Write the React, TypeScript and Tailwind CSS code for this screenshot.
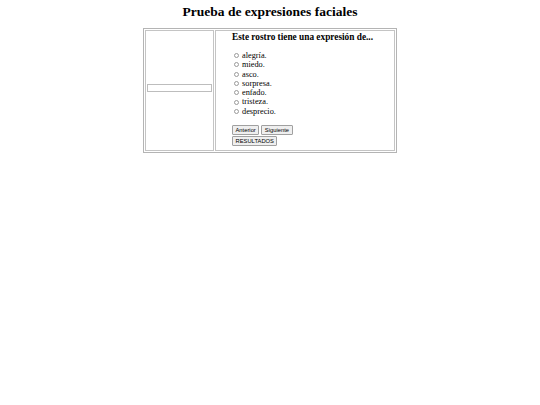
export default function App() {
  const options = [
    "alegría.",
    "miedo.",
    "asco.",
    "sorpresa.",
    "enfado.",
    "tristeza.",
    "desprecio.",
  ];

  return (
    <div className="min-h-[405px] w-full bg-white text-black font-['Liberation_Serif',serif]">
      <h1 className="pt-[4px] text-center text-[13.5px] font-bold leading-[16px]">
        Prueba de expresiones faciales
      </h1>

      <div className="mx-auto mt-[8px] flex w-[254px] gap-[1px] border border-[#b4b4b4] p-[1px]">
        {/* left cell: image placeholder */}
        <div className="flex w-[69px] shrink-0 items-center border border-[#c4c4c4] px-[1px] pb-[6px]">
          <div className="h-[8px] w-full border border-[#bdbdbd] bg-white" />
        </div>

        {/* right cell: question */}
        <div className="flex-1 border border-[#c4c4c4] pb-[4px] pl-[16px] pt-[1px]">
          <h2 className="whitespace-nowrap text-[9.3px] font-bold leading-[11px]">
            Este rostro tiene una expresión de...
          </h2>
          <ul className="mt-[8px] text-[8.3px] leading-[9.3px] text-black">
            {options.map((o) => (
              <li key={o} className="flex items-center gap-[3px] pl-[2px]">
                <span className="inline-block h-[5px] w-[5px] rounded-full border border-[#9a9a9a]" />
                {o}
              </li>
            ))}
          </ul>
          <div className="mt-[9px] flex flex-col items-start gap-[1px] font-['Liberation_Sans',sans-serif] text-[5.8px] leading-[6px]">
            <div className="flex gap-[2px]">
              <button className="rounded-[1px] border border-[#a0a0a0] bg-[#efefef] px-[2.5px] py-[1px]">
                Anterior
              </button>
              <button className="rounded-[1px] border border-[#a0a0a0] bg-[#efefef] px-[2.5px] py-[1px]">
                Siguiente
              </button>
            </div>
            <button className="rounded-[1px] border border-[#a0a0a0] bg-[#efefef] px-[2.5px] py-[1px]">
              RESULTADOS
            </button>
          </div>
        </div>
      </div>
    </div>
  );
}
